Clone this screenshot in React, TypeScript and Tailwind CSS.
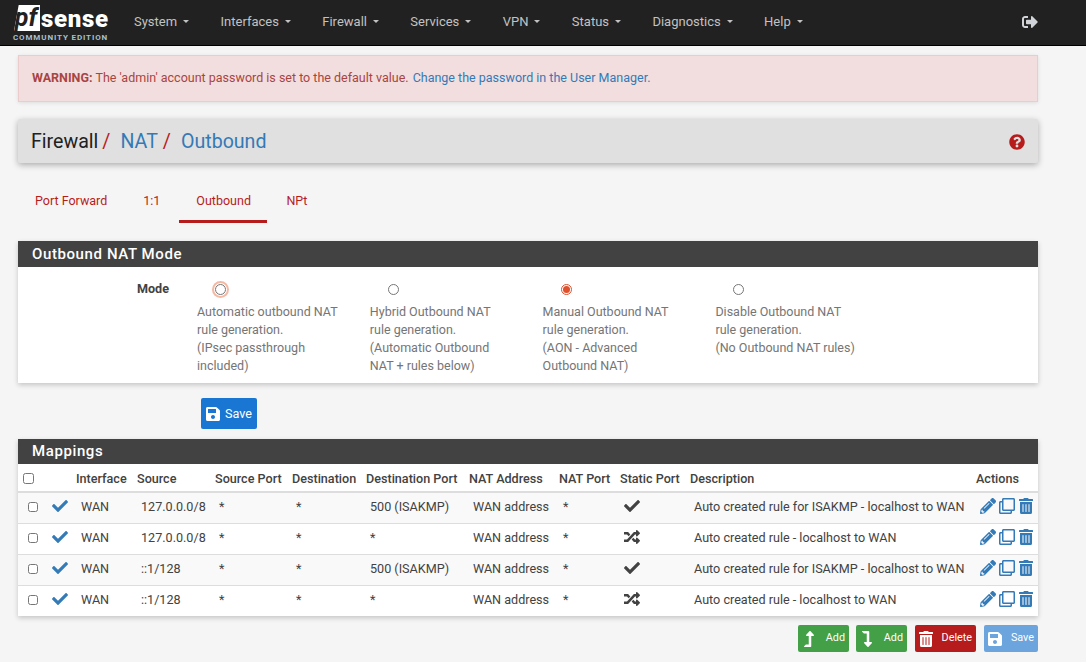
import type { ReactNode } from 'react';
import {
  FaCheck,
  FaLevelDownAlt,
  FaLevelUpAlt,
  FaPencilAlt,
  FaQuestionCircle,
  FaRandom,
  FaRegClone,
  FaSave,
  FaSignOutAlt,
  FaTrashAlt,
} from 'react-icons/fa';

const navItems = ['System', 'Interfaces', 'Firewall', 'Services', 'VPN', 'Status', 'Diagnostics', 'Help'];

const modes = [
  { lines: ['Automatic outbound NAT', 'rule generation.', '(IPsec passthrough', 'included)'], focused: true },
  { lines: ['Hybrid Outbound NAT', 'rule generation.', '(Automatic Outbound', 'NAT + rules below)'] },
  { lines: ['Manual Outbound NAT', 'rule generation.', '(AON - Advanced', 'Outbound NAT)'], checked: true },
  { lines: ['Disable Outbound NAT', 'rule generation.', '(No Outbound NAT rules)'] },
];

const rows = [
  { source: '127.0.0.0/8', dest: '500 (ISAKMP)', fixed: true, desc: 'Auto created rule for ISAKMP - localhost to WAN' },
  { source: '127.0.0.0/8', dest: '*', fixed: false, desc: 'Auto created rule - localhost to WAN' },
  { source: '::1/128', dest: '500 (ISAKMP)', fixed: true, desc: 'Auto created rule for ISAKMP - localhost to WAN' },
  { source: '::1/128', dest: '*', fixed: false, desc: 'Auto created rule - localhost to WAN' },
];

const headers = [
  ['Interface', 'w-[61px]'],
  ['Source', 'w-[78px]'],
  ['Source Port', 'w-[77px]'],
  ['Destination', 'w-[74px]'],
  ['Destination Port', 'w-[103px]'],
  ['NAT Address', 'w-[90px]'],
  ['NAT Port', 'w-[61px]'],
  ['Static Port', 'w-[70px]'],
  ['Description', 'w-[286px]'],
  ['Actions', ''],
];

function Panel({ title, heading, children }: { title: string; heading: string; children: ReactNode }) {
  return (
    <div className="bg-white shadow-[0_2px_5px_rgba(0,0,0,0.2)]">
      <div className={`flex items-center bg-[#424242] pl-[14px] text-[15px] font-medium tracking-[0.6px] text-white ${heading}`}>
        {title}
      </div>
      {children}
    </div>
  );
}

function ActionButton({ icon, label, className }: { icon: ReactNode; label: string; className: string }) {
  return (
    <button className={`flex h-[27px] items-center justify-between rounded-[2px] pr-[4px] pl-[3px] text-[10.8px] text-white ${className}`}>
      {icon}
      <span>{label}</span>
    </button>
  );
}

export default function App() {
  return (
    <div className="h-[662px] overflow-hidden bg-[#f5f5f5] font-['Roboto',sans-serif] text-[12.6px] text-[#424242]">
      <nav className="flex h-[46px] items-center border-b border-black bg-[#212121]">
        <div className="mt-[5px] ml-[13px] flex w-[121px] shrink-0 flex-col self-start">
          <div className="flex h-[26px] items-end pl-[1px]">
            <span className="h-[26px] w-[26px] bg-white pr-[2px] text-center text-[25px] leading-[25px] font-bold text-[#212121] italic [clip-path:polygon(18%_0,100%_0,100%_100%,0_100%)]">
              pf
            </span>
            <span className="ml-[1px] text-[24px] leading-[24px] font-black tracking-[0.7px] text-white">sense</span>
          </div>
          <span className="mt-[2px] text-[8px] leading-[9px] font-bold tracking-[0.87px] whitespace-nowrap text-[#a8c0d0]">COMMUNITY EDITION</span>
        </div>
        <div className="flex pb-[2px]">
          {navItems.map(item => (
            <span key={item} className="flex items-center px-[15.7px] text-[13px] text-[#c2c2c2] first:pl-0">
              {item}
              <span className="ml-[6px] h-0 w-0 border-x-[3px] border-t-[3px] border-x-transparent border-t-[#c2c2c2]" />
            </span>
          ))}
        </div>
        <div className="mr-[48px] ml-auto pb-[2px]">
          <FaSignOutAlt className="text-[16px] text-[#d0d4d8]" />
        </div>
      </nav>

      <div className="ml-[18px] w-[1020px]">
        <div className="mt-[9px] flex h-[47px] items-center border border-[#ebcccc] bg-[#f2dede] pl-[13px] text-[12.5px] text-[#a94442] shadow-[0_1px_4px_rgba(0,0,0,0.1)]">
          <strong className="font-bold">WARNING:</strong>
          <span className="ml-[3px]">The 'admin' account password is set to the default value.</span>
          <a className="ml-[4px] text-[#337ab7]">Change the password in the User Manager.</a>
        </div>

        <div className="mt-[17px] flex h-[44px] items-center rounded-[2px] bg-[#e0e0e0] px-[13px] pt-[1px] text-[19.6px] shadow-[0_2px_6px_rgba(0,0,0,0.3)]">
          <span className="text-[#212121]">Firewall</span>
          <span className="ml-[4px] text-[#b71c1c]">/</span>
          <a className="ml-[10px] text-[#337ab7]">NAT</a>
          <span className="ml-[5px] text-[#b71c1c]">/</span>
          <a className="ml-[10px] text-[#337ab7]">Outbound</a>
          <FaQuestionCircle className="ml-auto text-[16px] text-[#b71c1c]" />
        </div>

        <div className="mt-[17px] flex h-[43px] gap-[2px] text-[12.5px] leading-[18px] text-[#b71c1c]">
          <span className="px-[17px] pt-[12px]">Port Forward</span>
          <span className="px-[17px] pt-[12px]">1:1</span>
          <span className="border-b-[3px] border-[#b71c1c] pt-[12px] pr-[16.5px] pl-[17px]">Outbound</span>
          <span className="px-[17px] pt-[12px]">NPt</span>
        </div>

        <div className="mt-[18px]">
          <Panel title="Outbound NAT Mode" heading="h-[26px]">
            <div className="flex h-[116px]">
              <div className="w-[179px] pt-[13px] pr-[28px] text-right leading-[18px] font-bold">Mode</div>
              {modes.map(m => (
                <div key={m.lines[0]} className="w-[172.8px] text-[12.5px] leading-[18px] text-[#757575]">
                  <div className="flex h-[36px] pt-[17px] pl-[18px]">
                    <span
                      className={`h-[11px] w-[11px] rounded-full border border-[#767676] bg-white ${
                        m.focused ? 'shadow-[0_0_0_1px_#ffffff,0_0_0_3px_#f4b9a4]' : ''
                      } ${m.checked ? 'flex items-center justify-center border-[#d9532f]' : ''}`}
                    >
                      {m.checked && <span className="h-[7px] w-[7px] rounded-full bg-[#e0502c]" />}
                    </span>
                  </div>
                  {m.lines.map(l => (
                    <div key={l}>{l}</div>
                  ))}
                </div>
              ))}
            </div>
          </Panel>
        </div>

        <button className="mt-[15px] ml-[183px] flex h-[31px] w-[56px] items-center gap-[4px] rounded-[2px] bg-[#1976d2] pt-[1px] pl-[4px] text-white">
          <FaSave className="text-[16px]" />
          Save
        </button>

        <div className="mt-[10px]">
          <Panel title="Mappings" heading="h-[25px]">
            <table className="w-[1020px] table-fixed border-collapse text-left">
              <thead>
                <tr className="h-[28px] border-b-2 border-[#ddd]">
                  <th className="w-[34px] pt-[1px] pl-[5px]">
                    <input type="checkbox" className="block h-[11px] w-[11px]" />
                  </th>
                  <th className="w-[24px]" />
                  {headers.map(([h, w]) => (
                    <th key={h} className={`pt-[4px] pl-0 font-medium ${w}`}>
                      {h}
                    </th>
                  ))}
                </tr>
              </thead>
              <tbody>
                {rows.map((r, i) => (
                  <tr key={i} className={`h-[31px] border-b border-[#ddd] last:border-b-0 ${i % 2 === 0 ? 'bg-[#f9f9f9]' : 'bg-white'}`}>
                    <td className="pl-[10px]">
                      <input type="checkbox" className="mb-[2px] block h-[10px] w-[10px]" />
                    </td>
                    <td>
                      <FaCheck className="mb-[3px] text-[16px] text-[#337ab7]" />
                    </td>
                    <td className="pl-[5px]">WAN</td>
                    <td className="pl-[4px]">{r.source}</td>
                    <td className="pl-[4px]">*</td>
                    <td className="pl-[4px]">*</td>
                    <td className="pl-[4px]">{r.dest}</td>
                    <td className="pl-[4px]">WAN address</td>
                    <td className="pl-[4px]">*</td>
                    <td className="pl-[4px]">{r.fixed ? <FaCheck className="mb-[3px] text-[16px]" /> : <FaRandom className="mb-[3px] text-[16px]" />}</td>
                    <td className="pl-[4px]">{r.desc}</td>
                    <td className="pl-[4px]">
                      <div className="mb-[3px] flex items-center gap-[3px] text-[16px] text-[#337ab7]">
                        <FaPencilAlt />
                        <FaRegClone />
                        <FaTrashAlt />
                      </div>
                    </td>
                  </tr>
                ))}
              </tbody>
            </table>
          </Panel>
        </div>

        <div className="mt-[9px] flex justify-end">
          <ActionButton icon={<FaLevelUpAlt className="text-[16px]" />} label="Add" className="w-[51px] bg-[#43a047]" />
          <ActionButton icon={<FaLevelDownAlt className="text-[16px]" />} label="Add" className="ml-[7px] w-[51px] bg-[#43a047]" />
          <ActionButton icon={<FaTrashAlt className="text-[16px]" />} label="Delete" className="ml-[8px] w-[61px] bg-[#b71c1c]" />
          <ActionButton icon={<FaSave className="text-[16px]" />} label="Save" className="ml-[8px] w-[54px] bg-[#6ca4de]" />
        </div>
      </div>
    </div>
  );
}
